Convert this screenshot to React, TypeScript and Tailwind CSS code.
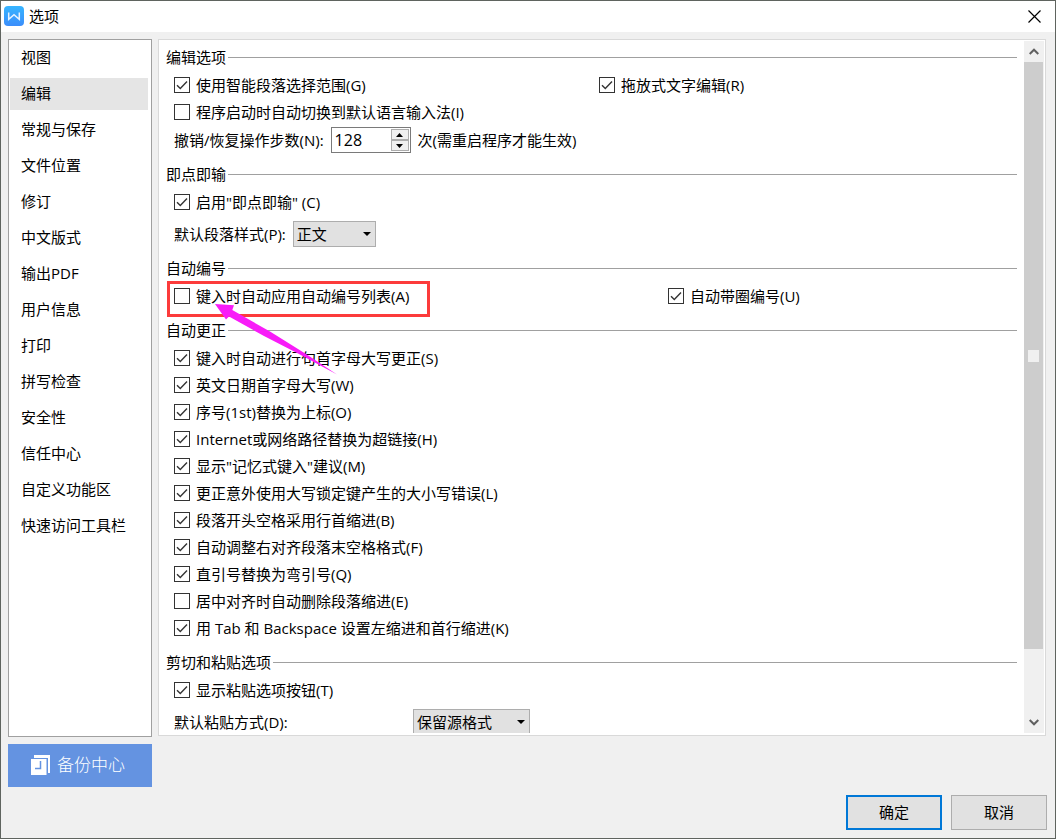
import { useState, type ReactNode } from 'react';

const navItems = [
  '视图', '编辑', '常规与保存', '文件位置', '修订', '中文版式', '输出PDF',
  '用户信息', '打印', '拼写检查', '安全性', '信任中心', '自定义功能区', '快速访问工具栏',
];

const corrections = [
  { label: '键入时自动进行句首字母大写更正(S)', on: true },
  { label: '英文日期首字母大写(W)', on: true },
  { label: '序号(1st)替换为上标(O)', on: true },
  { label: 'Internet或网络路径替换为超链接(H)', on: true },
  { label: '显示"记忆式键入"建议(M)', on: true },
  { label: '更正意外使用大写锁定键产生的大小写错误(L)', on: true },
  { label: '段落开头空格采用行首缩进(B)', on: true },
  { label: '自动调整右对齐段落末空格格式(F)', on: true },
  { label: '直引号替换为弯引号(Q)', on: true },
  { label: '居中对齐时自动删除段落缩进(E)', on: false },
  { label: '用 Tab 和 Backspace 设置左缩进和首行缩进(K)', on: true },
];

function Check({ label, on = false }: { label: string; on?: boolean }) {
  return (
    <label className="flex h-[27px] w-fit items-center gap-1.5 whitespace-nowrap">
      <span className="grid size-4 shrink-0">
        <input
          type="checkbox"
          defaultChecked={on}
          className="peer col-start-1 row-start-1 size-4 appearance-none border border-[#333333] bg-white"
        />
        <svg
          viewBox="0 0 16 16"
          className="pointer-events-none invisible col-start-1 row-start-1 size-4 peer-checked:visible"
          fill="none"
          stroke="#333333"
          strokeWidth="1.4"
        >
          <path d="M3 8.2 6.3 11.5 13 4.6" />
        </svg>
      </span>
      <span>{label}</span>
    </label>
  );
}

function Section({ title, children }: { title: string; children: ReactNode }) {
  return (
    <section>
      <div className="flex h-7 items-center gap-0.5">
        <h2 className="whitespace-nowrap">{title}</h2>
        <span className="h-px flex-1 bg-[#a0a0a0]" />
      </div>
      <div className="relative pl-2">{children}</div>
    </section>
  );
}

function Dropdown({ id, options, wide = false }: { id: string; options: string[]; wide?: boolean }) {
  return (
    <span className={wide ? 'grid w-[117px]' : 'grid w-[83px]'}>
      <select
        id={id}
        className="col-start-1 row-start-1 h-[26px] w-full appearance-none border border-[#adadad] bg-[#e1e1e1] pl-[3px]"
      >
        {options.map((o) => (
          <option key={o}>{o}</option>
        ))}
      </select>
      <svg
        viewBox="0 0 8 4"
        className="pointer-events-none col-start-1 row-start-1 mr-[5px] h-1 w-2 self-center justify-self-end"
      >
        <path d="M0 0h8L4 4z" />
      </svg>
    </span>
  );
}

export default function App() {
  const [active, setActive] = useState('编辑');
  const [steps, setSteps] = useState(128);

  return (
    <div className="flex h-screen flex-col border border-[#5f645f] bg-[#f0f0f0] font-['Open_Sans','Noto_Sans_CJK_SC',sans-serif] text-[15px] leading-5 text-black">
      <header className="flex h-[31px] shrink-0 items-center bg-white pb-px pl-[3px]">
        <svg viewBox="0 0 20 20" className="size-5">
          <defs>
            <linearGradient id="logo" x1="0" y1="0" x2="0" y2="1">
              <stop offset="0" stopColor="#36b5ff" />
              <stop offset="1" stopColor="#3b8dfb" />
            </linearGradient>
          </defs>
          <rect width="20" height="20" rx="4" fill="url(#logo)" />
          <path d="M4.700 6.500v6.800L10 8.800l5.300 4.500V6.500" fill="none" stroke="#e6f3ff" strokeWidth="1.500" />
        </svg>
        <h1 className="pl-[5px]">选项</h1>
        <button type="button" aria-label="关闭" className="mr-[14px] ml-auto">
          <svg viewBox="0 0 13 13" className="size-[13px]" fill="none" stroke="#000000" strokeWidth="1.2">
            <path d="M.5.5l12 12M12.5.5l-12 12" />
          </svg>
        </button>
      </header>

      <main className="flex min-h-0 flex-1 gap-1.5 pt-[7px] pr-[9px] pl-[7px]">
        <div className="flex w-36 shrink-0 flex-col gap-[7px]">
          <nav className="flex min-h-0 flex-1 flex-col gap-1 overflow-hidden border border-[#a0a0a0] bg-white pt-0.5 pr-[3px] pl-px">
            {navItems.map((item) => (
              <button
                key={item}
                type="button"
                onClick={() => setActive(item)}
                className={
                  item === active
                    ? 'h-8 shrink-0 bg-[#e5e5e5] pb-0.5 pl-[11px] text-left whitespace-nowrap'
                    : 'h-8 shrink-0 pb-0.5 pl-[11px] text-left whitespace-nowrap'
                }
              >
                {item}
              </button>
            ))}
          </nav>
          <button
            type="button"
            className="flex h-[43px] shrink-0 items-center gap-1.5 bg-[#6493e1] pb-0.5 pl-[23px] text-[17px] font-light text-white"
          >
            <svg viewBox="0 0 20 20" className="size-5">
              <path d="M3 0h16v18h-2V3H3z" fill="#ffffff" />
              <path d="M0 4h15.500v16H0z" fill="#ffffff" />
              <path d="M9.500 6v7.500H4" fill="none" stroke="#6493e1" strokeWidth="1.500" />
            </svg>
            备份中心
          </button>
        </div>

        <div className="mb-[51px] flex min-w-0 flex-1 border border-[#d9d9d9] bg-white pt-px pr-px pb-0.5 pl-[7px]">
          <div className="flex min-w-0 flex-1 flex-col gap-[7px] overflow-hidden pt-0.5 pr-[7px]">
            <Section title="编辑选项">
              <div className="flex">
                <div className="w-[425px]">
                  <Check label="使用智能段落选择范围(G)" on />
                </div>
                <Check label="拖放式文字编辑(R)" on />
              </div>
              <Check label="程序启动时自动切换到默认语言输入法(I)" />
              <div className="mt-0.5 flex h-[26px] items-center gap-[7px] whitespace-nowrap">
                <label htmlFor="steps">撤销/恢复操作步数(N):</label>
                <span className="flex h-[26px] w-20 border border-[#7a7a7a] bg-white p-px">
                  <input
                    id="steps"
                    type="text"
                    inputMode="numeric"
                    value={steps}
                    onChange={(e) => setSteps(Number(e.target.value) || 0)}
                    className="min-w-0 flex-1 pl-0.5 text-base outline-none"
                  />
                  <span className="flex w-[18px] flex-col">
                    <button
                      type="button"
                      aria-label="增加"
                      onClick={() => setSteps(steps + 1)}
                      className="flex flex-1 items-center justify-center border border-[#adadad] bg-[#f0f0f0]"
                    >
                      <svg viewBox="0 0 7 4" className="h-1 w-[7px]"><path d="M0 4h7L3.500 0z" /></svg>
                    </button>
                    <button
                      type="button"
                      aria-label="减少"
                      onClick={() => setSteps(steps - 1)}
                      className="flex flex-1 items-center justify-center border border-[#adadad] bg-[#f0f0f0]"
                    >
                      <svg viewBox="0 0 7 4" className="h-1 w-[7px]"><path d="M0 0h7L3.500 4z" /></svg>
                    </button>
                  </span>
                </span>
                <span>次(需重启程序才能生效)</span>
              </div>
            </Section>

            <Section title="即点即输">
              <Check label={'启用"即点即输" (C)'} on />
              <div className="mt-1.5 flex h-[26px] items-center gap-[7px] whitespace-nowrap">
                <label htmlFor="style">默认段落样式(P):</label>
                <Dropdown id="style" options={['正文']} />
              </div>
            </Section>

            <Section title="自动编号">
              <div className="flex">
                <div className="w-[494px]">
                  <Check label="键入时自动应用自动编号列表(A)" />
                </div>
                <Check label="自动带圈编号(U)" on />
              </div>
              <div className="pointer-events-none absolute -top-px left-px h-9 w-[263px] border-3 border-[#fc3b3b]" />
              <svg viewBox="0 0 124 72" className="pointer-events-none absolute top-[21px] left-[48px] z-10 h-[72px] w-[124px]">
                <path d="M1 1 20 2.300 18.300 7 56 28.500 92 51 123 71.500 84 50.500 50 33 15 13.500 12 16.500z" fill="#f81cf8" />
              </svg>
            </Section>

            <Section title="自动更正">
              {corrections.map((c) => (
                <Check key={c.label} label={c.label} on={c.on} />
              ))}
            </Section>

            <Section title="剪切和粘贴选项">
              <Check label="显示粘贴选项按钮(T)" on />
              <div className="mt-1.5 flex h-[26px] items-center whitespace-nowrap">
                <label htmlFor="paste" className="w-[239px]">默认粘贴方式(D):</label>
                <Dropdown id="paste" options={['保留源格式']} wide />
              </div>
            </Section>
          </div>

          <div className="flex w-5 shrink-0 flex-col bg-[#f0f0f0]">
            <button type="button" aria-label="向上滚动" className="flex h-[21px] shrink-0 items-center justify-center">
              <svg viewBox="0 0 10 7" className="h-[7px] w-[10px]" fill="none" stroke="#606060" strokeWidth="2">
                <path d="M.7 6 5 1.700 9.300 6" />
              </svg>
            </button>
            <div className="flex min-h-0 flex-1 flex-col">
              <div className="mr-px flex flex-[587] items-center justify-center bg-[#cdcdcd]">
                <span className="h-3 w-[11px] bg-[#f0f0f0]" />
              </div>
              <div className="flex-[63]" />
            </div>
            <button type="button" aria-label="向下滚动" className="flex h-[21px] shrink-0 items-center justify-center">
              <svg viewBox="0 0 10 7" className="h-[7px] w-[10px]" fill="none" stroke="#606060" strokeWidth="2">
                <path d="M.7 1 5 5.300 9.300 1" />
              </svg>
            </button>
          </div>
        </div>
      </main>

      <footer className="flex shrink-0 justify-end gap-[9px] pt-2 pr-2 pb-2">
        <button type="button" className="h-[35px] w-24 border-2 border-[#0078d7] bg-[#e1e1e1] pb-0.5">确定</button>
        <button type="button" className="h-[35px] w-24 border border-[#adadad] bg-[#e1e1e1] pb-0.5">取消</button>
      </footer>
    </div>
  );
}
